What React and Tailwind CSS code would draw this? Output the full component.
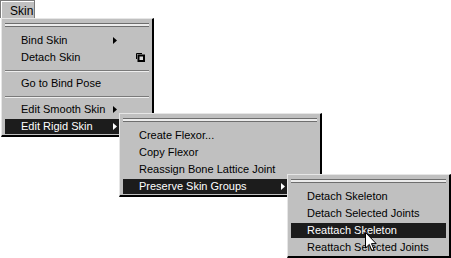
import React from "react";

const menus = [
  {
    pos: "left-[1px] top-[18px] w-[153px]",
    items: [
      { label: "Bind Skin", arrow: true },
      { label: "Detach Skin", option: true },
      { sep: true },
      { label: "Go to Bind Pose" },
      { sep: true },
      { label: "Edit Smooth Skin", arrow: true },
      { label: "Edit Rigid Skin", arrow: true, active: true },
    ],
    trailing: true,
  },
  {
    pos: "left-[119px] top-[113px] w-[203px]",
    items: [
      { label: "Create Flexor..." },
      { label: "Copy Flexor" },
      { label: "Reassign Bone Lattice Joint" },
      { label: "Preserve Skin Groups", arrow: true, active: true },
    ],
    trailing: true,
  },
  {
    pos: "left-[287px] top-[174px] w-[164px]",
    items: [
      { label: "Detach Skeleton" },
      { label: "Detach Selected Joints" },
      { label: "Reattach Skeleton", active: true },
      { label: "Reattach Selected Joints" },
    ],
    trailing: false,
  },
];

const Arrow = ({ white }) => (
  <svg width="4" height="7" viewBox="0 0 4 7">
    <path d="M0 0 L4 3.5 L0 7 Z" fill={white ? "#ffffff" : "#000000"} />
  </svg>
);

const OptionBox = () => (
  <svg width="9" height="9" viewBox="0 0 9 9">
    <path d="M0.5 6 V0.5 H6" fill="none" stroke="#000" strokeWidth="1" />
    <rect x="2.5" y="2.5" width="5.5" height="5.5" fill="#d8d8d8" stroke="#000" strokeWidth="2" />
  </svg>
);

const Menu = ({ pos, items, trailing }) => (
  <div
    className={`absolute ${pos} bg-[#c0c0c0] border-l border-t border-l-[#e6e6e6] border-t-[#e6e6e6] border-r-2 border-b-2 border-r-black border-b-black px-[3px]`}
  >
    {/* tear-off */}
    <div className="pt-[4px] pb-[5px]">
      <div className="h-px bg-[#6e6e6e]" />
      <div className="h-[2px] bg-[#ececec]" />
      <div className="h-px bg-[#6e6e6e]" />
    </div>
    {items.map((it, i) =>
      it.sep ? (
        <div key={i} className="h-[9px] flex flex-col justify-center">
          <div className="h-px bg-[#7a7a7a]" />
          <div className="h-px bg-[#eeeeee]" />
        </div>
      ) : (
        <div key={i} className="h-[17px] py-px">
          <div
            className={`h-full flex items-center pl-[16px] ${
              it.active ? "bg-[#1c1c1c] text-white" : "text-black"
            }`}
          >
            <span className="flex-1 whitespace-nowrap leading-none">{it.label}</span>
            {trailing && (
              <>
                <span className="w-[4px] flex items-center">
                  {it.arrow && <Arrow white={it.active} />}
                </span>
                <span className="w-[32px] pl-[19px] flex items-center">
                  {it.option && <OptionBox />}
                </span>
              </>
            )}
          </div>
        </div>
      )
    )}
  </div>
);

export default function App() {
  return (
    <div className="relative w-[451px] h-[258px] bg-white overflow-hidden font-['Liberation_Sans',Arial,sans-serif] text-[11px]">
      {/* menu bar title */}
      <div className="w-[35px] h-[18px] border border-[#7a7a7a] border-b-0 bg-[#c0c0c0]">
        <div className="h-full border-l border-t border-white pl-[8px] pt-[2px] text-[12px] leading-[14px] text-black">
          Skin
        </div>
      </div>

      {menus.map((m, i) => (
        <Menu key={i} {...m} />
      ))}

      {/* mouse cursor */}
      <svg
        className="absolute left-[365px] top-[232px]"
        width="12"
        height="20"
        viewBox="0 0 12 20"
      >
        <path
          d="M0.5 0.5 L0.5 16 L4.3 12.4 L6.8 18.5 L9 17.6 L6.5 11.6 L11.2 11.6 Z"
          fill="#ffffff"
          stroke="#000000"
          strokeWidth="1"
          strokeLinejoin="miter"
        />
      </svg>
    </div>
  );
}
